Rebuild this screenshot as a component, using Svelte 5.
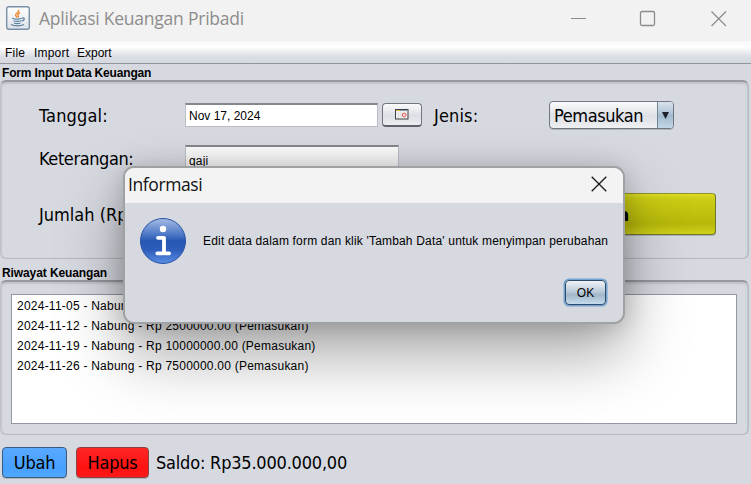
<script>
  const entries = [
    '2024-11-05 - Nabung - Rp 5000000.00 (Pemasukan)',
    '2024-11-12 - Nabung - Rp 2500000.00 (Pemasukan)',
    '2024-11-19 - Nabung - Rp 10000000.00 (Pemasukan)',
    '2024-11-26 - Nabung - Rp 7500000.00 (Pemasukan)'
  ];
</script>

<main class="window">
  <header class="titlebar">
    <svg class="java" width="24" height="24" viewBox="0 0 24 24">
      <defs><linearGradient id="jb" x1="0" y1="0" x2="0" y2="1"><stop offset="0" stop-color="#fff" /><stop offset="1" stop-color="#dde3e9" /></linearGradient></defs>
      <rect x=".7" y=".7" width="22.6" height="22.6" rx="2.2" fill="url(#jb)" stroke="#7890a5" stroke-width="1.4" />
      <path d="M12.4 3.8c1.8 2.2-3.4 3.4-2.8 5.6.2.8.9 1.2 1.6 1.7M14.2 6.7c-2 1-3.2 2-2.1 3.2.6.7.2 1.3-.4 1.7" fill="none" stroke="#ec8a36" stroke-width="1.4" />
      <path d="M6.2 12.3c2.7 1 6.900 1 9.700 0M7.500 14.700c2.600.8 5.200.8 7.500 0M8 17c2.200.7 4.500.7 6.500 0M5 18.500c3.500 1.700 9.500 1.700 13 0M16 12c3.200-.8 3 2.200-.4 3.200" fill="none" stroke="#56809f" stroke-width="1.200" />
    </svg>
    <span class="apptitle">Aplikasi Keuangan Pribadi</span>
    <svg class="controls" width="160" height="20" viewBox="0 0 160 20" fill="none" stroke="#8b8b8b">
      <path d="M1 10.500h15" /><rect x="70.500" y="3.500" width="14" height="14" rx="1.500" stroke-width="1.300" /><path d="M141.500 3.500l14.500 14.500M156 3.500l-14.500 14.500" stroke-width="1.200" />
    </svg>
  </header>
  <nav class="menu"><span class="m1">File</span><span class="m2">Import</span><span class="m3">Export</span></nav>

  <h2 class="h1">Form Input Data Keuangan</h2>
  <section class="panel form">
    <div class="row r1">
      <label class="tanggal" for="tgl">Tanggal:</label>
      <div class="field date" id="tgl"><span>Nov 17, 2024</span></div>
      <button class="cal" aria-label="Kalender">
        <svg width="14" height="11" viewBox="0 0 14 11">
          <rect x=".5" y=".5" width="12.500" height="9.500" fill="#f2eeee" stroke="#38423f" />
          <path d="M1 1.500h4" stroke="#e4b34c" /><path d="M5 1.500h7.500" stroke="#829db4" />
          <path d="M3.500 3v6M6 3v6" stroke="#d9d5d8" stroke-width=".7" />
          <circle cx="9.200" cy="6" r="1.900" fill="#f8dada" stroke="#df5c62" />
        </svg>
      </button>
      <label class="jenis" for="jns">Jenis:</label>
      <div class="combo" id="jns"><span class="value">Pemasukan</span><span class="arrow"><svg width="7" height="7"><path d="M0 0h7L3.500 7z" fill="#1c222a" /></svg></span></div>
    </div>
    <div class="row r2"><label class="ket" for="ket">Keterangan:</label><div class="field desc" id="ket"><span>gaji</span></div></div>
    <div class="row r3"><span class="label jumlah">Jumlah (Rp):</span><button class="add">Tambah Data</button></div>
  </section>

  <h2 class="h2">Riwayat Keuangan</h2>
  <section class="panel history">
    <ul>{#each entries as entry}<li><span>{entry}</span></li>{/each}</ul>
  </section>
  <footer>
    <button class="action ubah">Ubah</button><button class="action hapus">Hapus</button><span class="saldo">Saldo: Rp35.000.000,00</span>
  </footer>

  <div class="dialog" role="dialog" aria-label="Informasi">
    <div class="dtitle"><span>Informasi</span>
      <svg width="16" height="16" viewBox="0 0 16 16"><path d="M.700.700l14.600 14.600M15.300.700L.700 15.300" stroke="#171717" stroke-width="1.300" /></svg>
    </div>
    <div class="dbody">
      <svg class="info" width="48" height="48" viewBox="0 0 48 48">
        <defs><linearGradient id="ib" x1="0" y1="0" x2="0" y2="1"><stop offset="0" stop-color="#a6bbe5" /><stop offset=".38" stop-color="#4673c4" /><stop offset=".5" stop-color="#2857b1" /><stop offset=".7" stop-color="#2e5ebb" /><stop offset="1" stop-color="#5a8de4" /></linearGradient></defs>
        <circle cx="24" cy="24" r="22.500" fill="url(#ib)" stroke="#2752a6" />
        <circle cx="24" cy="12" r="3.200" fill="#fff" />
        <path d="M19 20.800h6v15.500M18.300 36.300h11.800" fill="none" stroke="#fff" stroke-width="3.800" stroke-linecap="round" stroke-linejoin="round" />
      </svg>
      <p>Edit data dalam form dan klik 'Tambah Data' untuk menyimpan perubahan</p>
    </div>
    <button class="ok">OK</button>
  </div>
</main>

<style>
  :global(body) { margin: 0; overflow: hidden; background: #d6d9e0; }
  * { box-sizing: border-box; }
  .window { position: relative; width: 751px; height: 484px; overflow: hidden; background: #d6d9e0; color: #000; font: 12px "Liberation Sans", Arial, sans-serif; white-space: nowrap; }
  button { padding: 0; margin: 0; color: #000; font: inherit; }
  .titlebar { display: flex; height: 41px; background: #f2f2f2; padding: 6px 0 0 6px; }
  .apptitle { margin-left: 9px; width: 531px; font: 17.5px/25px "Open Sans", "Noto Sans", sans-serif; letter-spacing: -.23px; color: #8d8d8d; }
  .controls { margin-top: 2px; }
  .menu { display: flex; height: 23px; border-bottom: 1px solid #8f949d; background: linear-gradient(#f8f8f8, #fff 28%, #eceef1 48%, #d9dce3 75%, #d6d9e0); line-height: 24px; padding-left: 5px; }
  .m1 { width: 29px; letter-spacing: .2px; } .m2 { width: 43px; letter-spacing: .2px; }
  h2 { margin: 0; height: 16px; padding-left: 2px; font: bold 12px/18px "Liberation Sans", Arial, sans-serif; letter-spacing: -.17px; }
  .panel { width: 749px; border: 1px solid #b7bac0; border-top: 2px solid #96989e; border-left-color: #bfc2c8; border-radius: 6px; box-shadow: inset 0 2px 2px #bfc2c8, inset -1px 0 1px #c3c6cc, inset 1px 0 1px #c8cbd1; }
  .form { height: 179px; padding: 18px 0 0 38px; }
  .h2 { height: 21px; line-height: 28px; letter-spacing: -.1px; }
  .row { display: flex; font: 18px "DejaVu Sans Condensed", "DejaVu Sans", sans-serif; }
  .r1 { height: 44px; }
  label, .label { width: 146px; line-height: 32px; }
  .tanggal { letter-spacing: .15px; }
  .ket { letter-spacing: -.4px; }
  .field { border: 1px solid #babdc4; border-top: 2px solid #85878b; background: #fff; font: 12px "Liberation Sans", Arial, sans-serif; padding-left: 3px; }
  .date { width: 193px; height: 24px; margin: 3px 4px 0 0; line-height: 22px; letter-spacing: 0; }
  .cal { width: 40px; height: 24px; margin-top: 3px; border: 1px solid #72777f; border-bottom: 2px solid #5f646c; border-radius: 4px; background: linear-gradient(#fafbfc, #dcdfe5 55%, #eceef1); display: flex; align-items: center; justify-content: center; }
  label.jenis { width: 115px; margin-left: 12px; letter-spacing: .15px; }
  .combo { display: flex; width: 125px; height: 28px; margin-top: 1px; border: 1px solid #707782; border-radius: 4px; overflow: hidden; background: linear-gradient(#fafbfc, #dcdfe5 55%, #eff1f4); box-shadow: 0 1px #afb3bb; }
  .value { width: 107px; padding-left: 4px; line-height: 28px; letter-spacing: -.4px; }
  .arrow { flex: 1; display: flex; align-items: center; justify-content: center; border-left: 1px solid #6f8497; background: linear-gradient(#d8e3ec, #abc0d2 49%, #a1b8cc 50%, #c2d7e8); }
  .r2 { height: 50px; }
  .r2 label { line-height: 30px; }
  .desc { width: 214px; height: 30px; margin-top: 1px; line-height: 28px; letter-spacing: .2px; background: linear-gradient(#fafafa, #f0f0f0); }
  .jumlah { width: 383px; line-height: 42px; }
  .add { width: 294px; height: 42px; margin-top: -1px; padding-left: 4px; border: 1px solid #71742f; border-top-color: #93922d; border-radius: 4px; background: linear-gradient(#dbdc24, #cccd14 12%, #b7b80a 75%, #d0d11a); box-shadow: 0 1px #afb3bb; font: bold 18px "DejaVu Sans Condensed", sans-serif; letter-spacing: -.3px; }
  .history { height: 155px; padding: 12px 10px; }
  ul { list-style: none; margin: 0; padding: 2px 5px; width: 726px; height: 130px; border: 1px solid #9297a1; background: #fff; }
  li { height: 20px; line-height: 19px; letter-spacing: .235px; }
  footer { display: flex; margin-top: 12px; padding-left: 2px; font: 18px/32px "DejaVu Sans Condensed", "DejaVu Sans", sans-serif; }
  .action { height: 31px; border: 1px solid #3a5b80; border-radius: 4px; box-shadow: 0 1px #b0b4bd; }
  .ubah { width: 65px; margin-right: 9px; line-height: 27px; letter-spacing: -.2px; background: linear-gradient(#59a9ff, #47a0ff 70%, #50a8ff); }
  .hapus { width: 73px; margin-right: 7px; line-height: 27px; letter-spacing: -.2px; border-color: #844; background: linear-gradient(#ff2525, #ff1111 70%, #ff1a1a); }
  .saldo { letter-spacing: -.2px; }
  .dialog { position: absolute; left: 123px; top: 166px; width: 502px; height: 158px; border: 2px solid #a0a1a3; border-radius: 11px; background: #d6d9e0; background-clip: padding-box; box-shadow: 0 30px 64px rgba(0,0,0,.35), 0 2px 24px rgba(0,0,0,.18); }
  .dtitle { display: flex; justify-content: space-between; height: 35px; padding: 8px 16px 0 3px; border-radius: 9px 9px 0 0; background: #f3f3f3; font: 17.5px/17px "Open Sans", "Noto Sans", sans-serif; letter-spacing: -.4px; color: #111; }
  .dbody { display: flex; height: 77px; padding: 14px 0 0 14px; }
  .dbody p { margin: 0 0 0 16px; line-height: 48px; letter-spacing: .18px; }
  .ok { display: block; margin-left: 440px; width: 41px; height: 25px; border: 1px solid #2f4b65; border-radius: 4px; background: linear-gradient(#f0f3f7, #bccbd9 45%, #a2b7ca 60%, #c4dced); box-shadow: 0 0 0 1.500px #73a4d1; }
</style>
